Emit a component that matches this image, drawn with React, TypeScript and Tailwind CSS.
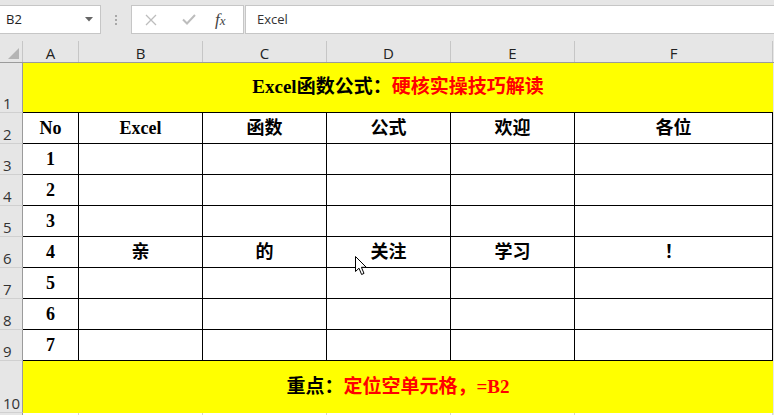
const serif = "font-['Liberation_Serif','Noto_Sans_CJK_SC',serif]";

const colWidths = ["w-[56px]", "w-[124px]", "w-[124px]", "w-[124px]", "w-[124px]", "w-[198px]"];
const colLetters = ["A", "B", "C", "D", "E", "F"];

const rows: string[][] = [
  ["No", "Excel", "函数", "公式", "欢迎", "各位"],
  ["1", "", "", "", "", ""],
  ["2", "", "", "", "", ""],
  ["3", "", "", "", "", ""],
  ["4", "亲", "的", "关注", "学习", "！"],
  ["5", "", "", "", "", ""],
  ["6", "", "", "", "", ""],
  ["7", "", "", "", "", ""],
];

function RowHead({ n, h }: { n: number; h: string }) {
  return (
    <div
      className={`w-[23px] ${h} shrink-0 bg-[#e6e6e6] border-r border-b border-r-[#9b9b9b] border-b-[#d0d0d0] flex items-end pl-[3px] pb-[1px] text-[15px] leading-none text-[#333] font-['Open_Sans',sans-serif]`}
    >
      {n}
    </div>
  );
}

function Cursor() {
  return (
    <svg
      className="absolute left-[355px] top-[256px]"
      width="13"
      height="20"
      viewBox="0 0 13 20"
    >
      <path
        d="M0.5 0.5 L0.5 15.5 L4 12.2 L6.6 18.5 L9 17.4 L6.4 11.3 L11.3 11.3 Z"
        fill="#fff"
        stroke="#000"
        strokeWidth="1"
        strokeLinejoin="round"
      />
    </svg>
  );
}

export default function App() {
  return (
    <div className="relative w-[774px] h-[415px] overflow-hidden bg-[#e6e6e6] font-['Open_Sans',sans-serif]">
      {/* formula bar */}
      <div className="h-[41px] flex items-start pt-[5px]">
        <div className="w-[101px] h-[29px] bg-white border border-[#c6c6c6] border-l-0 flex items-center justify-between pl-[6px] pr-[7px]">
          <span className="text-[13px] text-[#222]">B2</span>
          <svg width="8" height="5" viewBox="0 0 8 5">
            <path d="M0 0 H8 L4 4.5 Z" fill="#666" />
          </svg>
        </div>
        <div className="w-[30px] h-[29px] flex flex-col items-center justify-center gap-[2px]">
          <span className="w-[2px] h-[2px] bg-[#a8a8a8]" />
          <span className="w-[2px] h-[2px] bg-[#a8a8a8]" />
          <span className="w-[2px] h-[2px] bg-[#a8a8a8]" />
        </div>
        <div className="w-[113px] h-[29px] bg-white border border-[#c6c6c6] flex items-center pl-[13px]">
          <svg width="12" height="12" viewBox="0 0 12 12">
            <path d="M1 1 L11 11 M11 1 L1 11" stroke="#bdbdbd" strokeWidth="1.3" />
          </svg>
          <svg className="ml-[25px]" width="14" height="11" viewBox="0 0 14 11">
            <path d="M1 5.5 L5 9.5 L13 1" stroke="#bdbdbd" strokeWidth="2" fill="none" />
          </svg>
          <span className="ml-[19px] text-[17px] italic text-[#444] font-['Liberation_Serif',serif] leading-none">
            f<span className="text-[13px]">x</span>
          </span>
        </div>
        <div className="ml-[1px] flex-1 h-[29px] bg-white border border-[#c6c6c6] border-r-0 flex items-center pl-[11px]">
          <span className="text-[13px] text-[#333]">Excel</span>
        </div>
      </div>

      {/* column headers */}
      <div className="flex h-[22px] border-b border-[#9b9b9b]">
        <div className="w-[23px] shrink-0 border-r border-[#c6c6c6] flex items-end justify-end pr-[3px] pb-[3px]">
          <svg width="11" height="11" viewBox="0 0 11 11">
            <path d="M11 0 V11 H0 Z" fill="#b4b4b4" />
          </svg>
        </div>
        {colLetters.map((c, i) => (
          <div
            key={c}
            className={`${colWidths[i]} shrink-0 border-r border-[#c6c6c6] flex items-end justify-center pb-[1px] text-[15px] leading-none text-[#222]`}
          >
            {c}
          </div>
        ))}
      </div>

      {/* row 1 */}
      <div className="flex">
        <RowHead n={1} h="h-[50px]" />
        <div
          className={`w-[750px] h-[50px] bg-[#ffff00] border-b border-black flex items-center justify-center font-bold text-[19px] ${serif}`}
        >
          <span className="text-black">Excel函数公式：</span>
          <span className="text-[#ff0000]">硬核实操技巧解读</span>
        </div>
      </div>

      {/* table rows */}
      {rows.map((r, ri) => (
        <div key={ri} className="flex">
          <RowHead n={ri + 2} h="h-[31px]" />
          {r.map((v, ci) => (
            <div
              key={ci}
              className={`${colWidths[ci]} h-[31px] shrink-0 border-r border-b border-black bg-white flex items-center justify-center font-bold text-[18px] text-black ${serif}`}
            >
              {v}
            </div>
          ))}
        </div>
      ))}

      {/* row 10 */}
      <div className="flex">
        <RowHead n={10} h="h-[52px]" />
        <div
          className={`w-[750px] h-[52px] bg-[#ffff00] flex items-center justify-center font-bold text-[19px] ${serif}`}
        >
          <span className="text-black">重点：</span>
          <span className="text-[#ff0000]">定位空单元格，=B2</span>
        </div>
      </div>

      {/* row 11 (partial) */}
      <div className="flex">
        <div className="w-[23px] h-[20px] shrink-0 border-r border-[#9b9b9b]" />
        {colWidths.map((w, i) => (
          <div key={i} className={`${w} h-[20px] shrink-0 bg-white border-r border-[#d4d4d4]`} />
        ))}
      </div>

      <Cursor />
    </div>
  );
}
